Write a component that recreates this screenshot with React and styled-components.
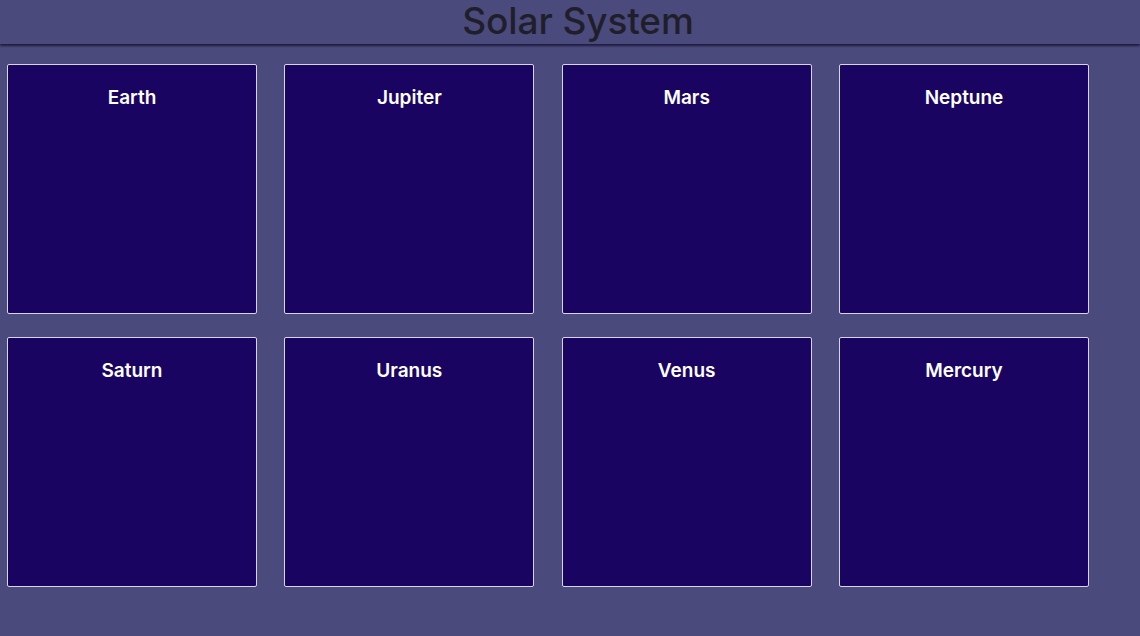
import styled, { createGlobalStyle } from 'styled-components'

const planets = ['Earth', 'Jupiter', 'Mars', 'Neptune', 'Saturn', 'Uranus', 'Venus', 'Mercury']

const GlobalStyle = createGlobalStyle`
  html, body {
    margin: 0;
    padding: 0;
    background: #4b4a7c;
    font-family: Inter, "Liberation Sans", sans-serif;
  }
`

const Page = styled.div`
  min-height: 636px;
  background: #4b4a7c;
`

const Header = styled.header`
  height: 44px;
  display: flex;
  align-items: center;
  justify-content: center;
  padding: 0 0 3px 16px;
  box-sizing: border-box;
  box-shadow: 0 2px 2px rgba(20, 18, 50, 0.8);
`

const Title = styled.h1`
  margin: 0;
  font-size: 37px;
  font-weight: 500;
  color: #1f1f2b;
  letter-spacing: -0.1px;
`

const Grid = styled.div`
  display: grid;
  grid-template-columns: repeat(4, 250px);
  column-gap: 27.33px;
  row-gap: 23px;
  padding: 20px 0 0 7px;
`

const Card = styled.div`
  width: 250px;
  height: 250px;
  box-sizing: border-box;
  background: #1a0462;
  border: 1px solid #d8d6e6;
  border-radius: 2px;
  display: flex;
  justify-content: center;
`

const Name = styled.h3`
  margin: 21px 0 0;
  font-size: 19px;
  font-weight: 600;
  color: #ffffff;
`

const App = () => {
  return (
    <Page>
      <GlobalStyle />
      <Header>
        <Title>Solar System</Title>
      </Header>
      <Grid>
        {planets.map((p) => (
          <Card key={p}>
            <Name>{p}</Name>
          </Card>
        ))}
      </Grid>
    </Page>
  )
}

export default App
